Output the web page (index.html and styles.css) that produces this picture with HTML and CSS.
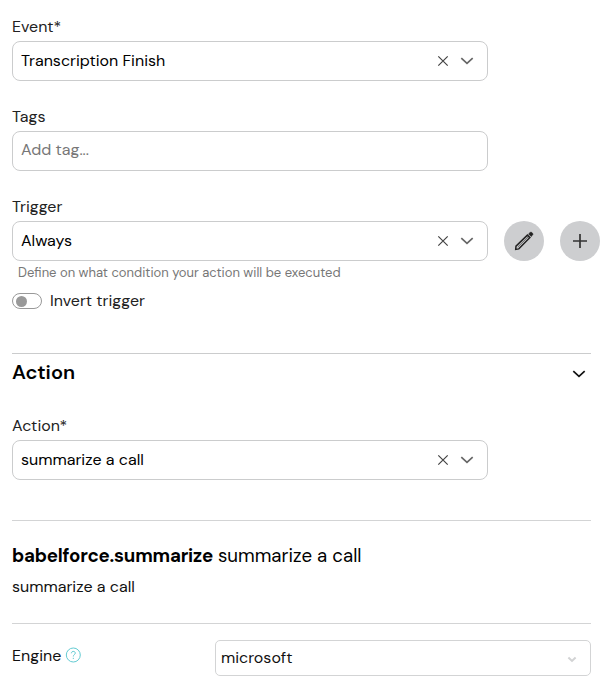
FILE: index.html
```html
<!DOCTYPE html>
<html lang="en">
<head>
<meta charset="utf-8">
<title>Event action</title>
<link rel="stylesheet" href="styles.css">
</head>
<body>
<svg class="defs" aria-hidden="true">
  <symbol id="clear" viewBox="0 0 12 12"><path d="M1.3 1.3 10.7 10.7M10.7 1.3 1.3 10.7"/></symbol>
  <symbol id="chevron" viewBox="0 0 14 8"><path d="M1.3 1.2 7 6.4 12.7 1.2"/></symbol>
</svg>
<main class="form">
  <section class="field">
    <div class="label">Event*</div>
    <div class="control"><span class="value">Transcription Finish</span><svg class="clear"><use href="#clear"/></svg><svg class="chevron"><use href="#chevron"/></svg></div>
  </section>
  <section class="field">
    <div class="label">Tags</div>
    <div class="control tags"><span class="value placeholder">Add tag...</span></div>
  </section>
  <section class="field trigger">
    <div class="label">Trigger</div>
    <div class="row">
      <div class="control"><span class="value">Always</span><svg class="clear"><use href="#clear"/></svg><svg class="chevron"><use href="#chevron"/></svg></div>
      <button class="round" aria-label="Edit"><svg width="20" height="20" viewBox="0 0 20 20"><path d="M1.7 18.3 2 15.2 13.4 4.1 15.9 6.6 4.8 17.9Z" fill="none" stroke="#222" stroke-width="1.5"/><path d="M3.8 16 14.3 5.6" stroke="#222" stroke-width=".6"/><path d="M14.6 2.9 16.1 1.5Q17 .8 17.9 1.6L18.5 2.2Q19.3 3.1 18.6 4L17.1 5.4Z" fill="#222" stroke="#222" stroke-width=".7"/></svg></button>
      <button class="round" aria-label="Add"><svg width="16" height="16" viewBox="0 0 16 16"><path d="M8 1V15M1 8H15" stroke="#333" stroke-width="1.7"/></svg></button>
    </div>
    <div class="hint">Define on what condition your action will be executed</div>
    <div class="invert"><span class="switch"></span>Invert trigger</div>
  </section>
  <section class="action">
    <div class="heading"><h2>Action</h2><svg class="chevron dark"><use href="#chevron"/></svg></div>
    <div class="label">Action*</div>
    <div class="control"><span class="value">summarize a call</span><svg class="clear"><use href="#clear"/></svg><svg class="chevron"><use href="#chevron"/></svg></div>
  </section>
  <section class="summary">
    <h3><b>babelforce.summarize</b> summarize a call</h3>
    <p>summarize a call</p>
  </section>
  <section class="engine">
    <div class="engine-label">Engine<svg width="16" height="16" viewBox="0 0 16 16" fill="none" stroke="#63cbd2" stroke-width="1"><circle cx="8.3" cy="8" r="7"/><path d="M6.3 6.3C6.3 3.8 10.3 3.8 10.3 6.1 10.3 7.6 8.3 7.6 8.3 9.5M8.3 10.8V12"/></svg></div>
    <div class="select">microsoft<svg width="10" height="7" viewBox="0 0 10 7"><path d="M1.4 1.5 5 4.9 8.6 1.5" fill="none" stroke="#d2d3d4" stroke-width="2"/></svg></div>
  </section>
</main>
</body>
</html>
```
FILE: styles.css
```css
* { box-sizing: border-box; }
body { margin: 0; background: #fff; color: #111; font: 16px/24px "DM Sans", Inter, "Liberation Sans", sans-serif; }
.defs { display: none; }
.form { padding: 15px 14px 0 12px; }
.field { margin-bottom: 24px; }
.label { height: 24px; margin-bottom: 2px; color: #222; }
.control { display: flex; align-items: center; width: 476px; height: 40px; flex: none; border: 1px solid #cbcccd; border-radius: 8px; padding: 0 13px 1px 8px; }
.value { margin-right: auto; color: #000; }
.tags { padding-bottom: 3px; }
.value.placeholder { color: #777; }
.clear { width: 12px; height: 12px; margin-right: 11px; fill: none; stroke: #444; stroke-width: 1.2; }
.chevron { width: 14px; height: 8px; fill: none; stroke: #666; stroke-width: 1.7; }
.dark { stroke: #111; }
.row { display: flex; gap: 16px; }
.round { display: grid; place-items: center; flex: none; width: 40px; height: 40px; padding: 0; border: 0; border-radius: 50%; background: #cdced0; }
.trigger { margin-bottom: 40px; }
.hint { margin: 3px 0 7px 6px; height: 18px; font-size: 13px; line-height: 18px; color: #777; white-space: nowrap; }
.invert { display: flex; align-items: center; gap: 8px; height: 24px; color: #222; }
.switch { display: flex; align-items: center; width: 30px; height: 16px; border: 1px solid #999; border-radius: 8px; padding-left: 3px; }
.switch::before { content: ""; width: 11px; height: 11px; border-radius: 50%; background: #999; }
.action { height: 167px; border-top: 1px solid #cbcccd; padding-top: 4px; }
.heading { display: flex; align-items: center; justify-content: space-between; height: 28px; margin-bottom: 28px; padding-right: 5px; }
.heading .chevron { margin-top: 4px; }
h2, h3, p { margin: 0; }
h2 { font-size: 20px; line-height: 28px; font-weight: 600; color: #000; }
.summary { height: 103px; border-top: 1px solid #d3d4d5; padding-top: 21px; }
h3 { font-size: 18.72px; line-height: 28px; font-weight: 400; color: #000; margin-bottom: 5px; white-space: nowrap; }
h3 b { font-weight: 700; letter-spacing: -.22px; }
.engine { display: flex; border-top: 1px solid #d3d4d5; padding-top: 16px; }
.engine-label { display: flex; align-items: center; gap: 4px; width: 203px; height: 32px; }
.engine-label svg { margin-top: -2px; }
.select { display: flex; align-items: center; justify-content: space-between; width: 376px; height: 36px; border: 1px solid #d3d4d5; border-radius: 5px; padding: 0 13px 0 5px; }
.select svg { margin-top: 2px; }
```
